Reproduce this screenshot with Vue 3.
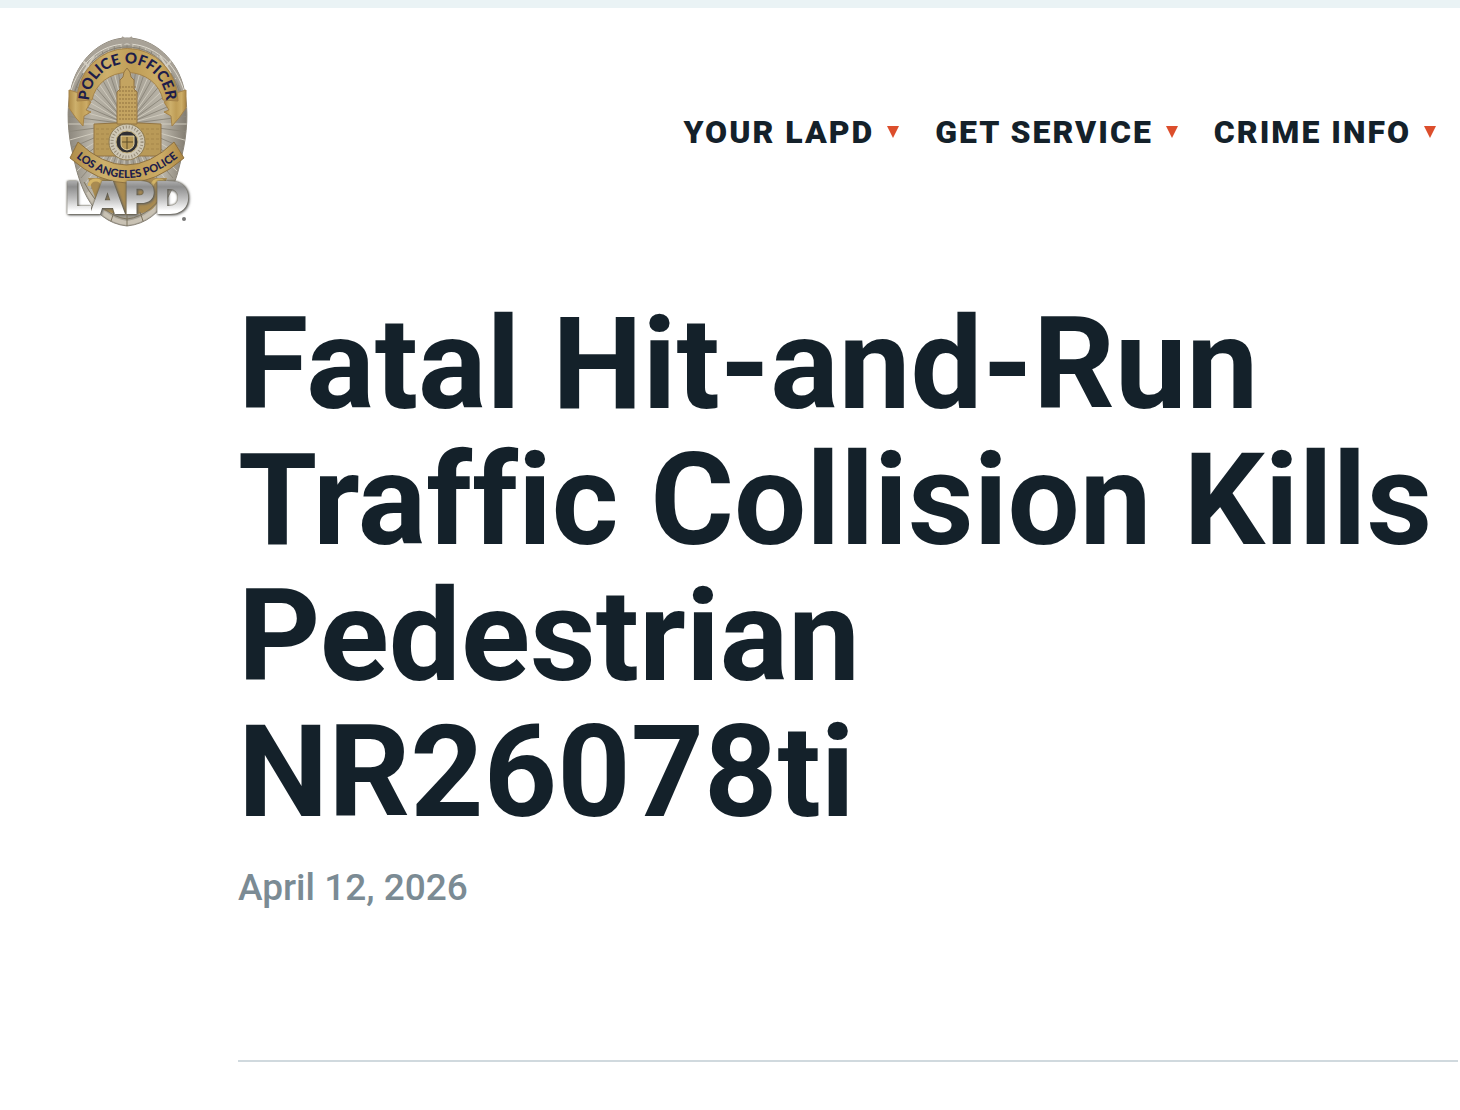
<script setup>
const menu = ['Your LAPD', 'Get Service', 'Crime Info']

const rays = Array.from({ length: 60 }, (_, i) => {
  const a = (i * 6 * Math.PI) / 180
  return {
    x: Math.round(67 + 62 * Math.sin(a)),
    y: Math.round(92 - 80 * Math.cos(a)),
    tone: i % 2 ? '#cfcabd' : '#8d887c',
  }
})
const floors = [55, 59, 63, 67, 71, 75, 79, 83, 87]
</script>

<template>
  <div class="page">
    <header class="header">
      <a class="logo" href="#" aria-label="LAPD home">
        <svg width="140" height="200" viewBox="0 0 140 200" aria-hidden="true">
          <defs>
            <linearGradient id="silver" x1="0" x2="1">
              <stop offset="0" stop-color="#8c877d" />
              <stop offset=".2" stop-color="#b9b4a8" />
              <stop offset=".5" stop-color="#a29d91" />
              <stop offset=".8" stop-color="#b9b4a8" />
              <stop offset="1" stop-color="#817b70" />
            </linearGradient>
            <linearGradient id="gold" x1="0" x2="1">
              <stop offset="0" stop-color="#b08d4a" />
              <stop offset=".3" stop-color="#cdb06c" />
              <stop offset=".55" stop-color="#bf9d56" />
              <stop offset=".8" stop-color="#ccac66" />
              <stop offset="1" stop-color="#ac8743" />
            </linearGradient>
            <linearGradient id="chrome" gradientUnits="userSpaceOnUse" x1="0" x2="0" y1="150" y2="182">
              <stop offset="0" stop-color="#a8a8a8" />
              <stop offset=".15" stop-color="#8e8e8e" />
              <stop offset=".5" stop-color="#bcbcbc" />
              <stop offset=".9" stop-color="#ffffff" />
            </linearGradient>
            <clipPath id="shield">
              <path d="M67 6C40 6 17 29 11 57C6 77 8 103 13 123C18 146 28 190 67 194C107 190 117 146 122 123C127 103 129 77 124 57C118 29 95 6 67 6Z" />
            </clipPath>
            <path id="arc-top" d="M29 70A38 38 0 0 1 106 70" />
            <path id="arc-bottom" d="M13 123Q67 169 121 123" />
          </defs>

          <path d="M67 6C40 6 17 29 11 57C6 77 8 103 13 123C18 146 28 190 67 194C107 190 117 146 122 123C127 103 129 77 124 57C118 29 95 6 67 6Z" fill="url(#silver)" stroke="#8a8478" stroke-width="1" />
          <g clip-path="url(#shield)">
            <path v-for="(r, i) in rays" :key="i" :d="`M67 92L${r.x} ${r.y}`" :stroke="r.tone" stroke-width="1" />
            <path d="M10 60C20 28 42 9 67 9S115 28 125 60" fill="none" stroke="#a8a297" stroke-width="6" />
            <path d="M10 62C19 30 41 12 67 12S116 30 125 62" fill="none" stroke="#dedacf" stroke-width="1" />
            <path d="M14 62C23 32 43 15 67 15S111 32 120 62" fill="none" stroke="#857f73" stroke-width="1" />
            <path d="M22 28L32 38M34 24L23 41M102 38L112 28M100 24L111 41" stroke="#d2cdc1" stroke-width="2" />
            <path d="M28 146H107L96 176Q67 190 39 176Z" fill="#a98b51" />
            <path d="M28 160Q42 188 67 191Q93 188 107 160" fill="none" stroke="#c9c2b4" stroke-width="4" />
            <path d="M24 150Q42 184 67 187Q93 184 111 150M67 182V194M54 180L50 192M80 180L84 192" fill="none" stroke="#7d745f" stroke-width="1" />
            <path d="M29 154Q30 148 36 148T42 154M92 154Q93 148 99 148T105 154" fill="none" stroke="#d5b566" stroke-width="3" />
          </g>
          <path d="M62 5L72 13M72 5L62 13" stroke="#a8a297" stroke-width="2" />

          <path d="M9 58L19 61L31 70L26 78L31 80L24 84L23 94L16 86L9 76Z" fill="url(#gold)" stroke="#a5834a" />
          <path d="M126 58L116 61L104 70L109 78L104 80L111 84L112 94L119 86L126 76Z" fill="url(#gold)" stroke="#a5834a" />
          <path d="M17 69A50 52 0 0 1 118 69L103 68A36 33 0 0 0 32 68Z" fill="url(#gold)" stroke="#a5834a" />

          <path d="M34 92Q67 89 101 92V124H34Z" fill="#b99a58" stroke="#937544" />
          <path d="M57 92V60L60 57V48L63 45L64 40L67 36L70 40L71 45L74 48V57L77 60V92Z" fill="#c4a461" stroke="#937544" />
          <path v-for="y in floors" :key="y" :d="`M59 ${y}H76`" stroke="#917341" stroke-width="1" stroke-dasharray="2 1" />
          <path d="M36 97H99M36 102H99M36 107H99M36 112H99M36 117H99" stroke="#a5864a" stroke-width="1" stroke-dasharray="3 2" />
          <circle cx="67" cy="110" r="18" fill="#cfc8b6" stroke="#8d7a50" />
          <circle cx="67" cy="110" r="15" fill="none" stroke="#968c79" stroke-width="3" stroke-dasharray="1 2" />
          <circle cx="67" cy="110" r="11" fill="#2f2f34" stroke="#c7b27d" />
          <path d="M61 104H74V112Q73 117 67 118Q61 117 61 112Z" fill="#b99a58" stroke="#e0cf9c" />
          <path d="M67 105V117M62 110H73" stroke="#5f4e2b" />

          <path d="M18 110Q67 156 114 110L124 126Q67 176 10 126Z" fill="url(#gold)" stroke="#8e7140" />
          <text class="ribbon-top"><textPath href="#arc-top" startOffset="50%" text-anchor="middle">POLICE OFFICER</textPath></text>
          <text class="ribbon-bottom"><textPath href="#arc-bottom" startOffset="50%" text-anchor="middle">LOS ANGELES POLICE</textPath></text>

          <text class="wordmark" x="67" y="181" text-anchor="middle">LAPD</text>
          <circle cx="124" cy="187" r="2" fill="#777777" />
        </svg>
      </a>
      <nav class="nav" aria-label="Main">
        <a v-for="item in menu" :key="item" class="nav-link" href="#">
          <span>{{ item }}</span>
          <svg class="caret" width="12" height="12" viewBox="0 0 12 12" aria-hidden="true">
            <path d="M0 0H12L6 12Z" fill="#dc4e2c" />
          </svg>
        </a>
      </nav>
    </header>
    <main class="article">
      <h1>Fatal Hit-and-Run Traffic Collision Kills Pedestrian NR26078ti</h1>
      <time datetime="2026-04-12">April 12, 2026</time>
      <hr />
    </main>
  </div>
</template>

<style>
body {
  margin: 0;
  background: #ffffff;
}
</style>

<style scoped>
.page {
  border-top: 8px solid #eaf3f5;
  color: #14212a;
  font-family: Roboto, "Liberation Sans", sans-serif;
}
.header {
  display: flex;
  align-items: center;
  justify-content: space-between;
  padding: 24px 24px 0 60px;
}
.logo,
.logo svg {
  display: block;
}
.nav {
  display: flex;
  gap: 36px;
}
.nav-link {
  display: flex;
  align-items: center;
  gap: 13px;
  color: inherit;
  font-size: 32px;
  font-weight: 900;
  line-height: 40px;
  letter-spacing: 2px;
  text-decoration: none;
  text-transform: uppercase;
  white-space: nowrap;
}
.article {
  padding: 64px 2px 48px 238px;
}
h1 {
  margin: 0;
  font-size: 128px;
  font-weight: 700;
  font-variant-ligatures: none;
  line-height: 136px;
}
time {
  display: block;
  margin-top: 24px;
  color: #7b8b94;
  font-size: 37px;
  font-weight: 500;
  line-height: 48px;
}
hr {
  height: 2px;
  margin: 148px 0 0;
  border: 0;
  background: #d0d9de;
}
.ribbon-top,
.ribbon-bottom {
  fill: #1d1d4a;
  font-family: Lato, sans-serif;
  font-weight: 900;
}
.ribbon-top {
  font-size: 15px;
}
.ribbon-bottom {
  font-size: 11px;
}
.wordmark {
  fill: url(#chrome);
  stroke: url(#chrome);
  stroke-width: 2px;
  font-family: "DejaVu Sans", sans-serif;
  font-size: 42px;
  font-weight: 700;
  filter: drop-shadow(0 0 1px #55503c) drop-shadow(1px 1px 1px #666666);
}
</style>
